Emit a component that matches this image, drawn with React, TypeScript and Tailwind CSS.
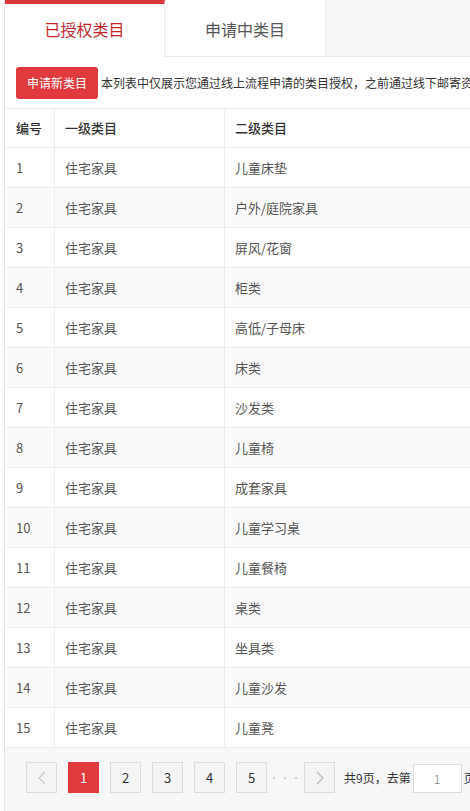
import React from "react";

const rows = [
  "儿童床垫",
  "户外/庭院家具",
  "屏风/花窗",
  "柜类",
  "高低/子母床",
  "床类",
  "沙发类",
  "儿童椅",
  "成套家具",
  "儿童学习桌",
  "儿童餐椅",
  "桌类",
  "坐具类",
  "儿童沙发",
  "儿童凳",
];

export default function App() {
  return (
    <div
      className="w-[470px] h-[811px] overflow-hidden bg-white"
      style={{ fontFamily: '"Microsoft YaHei", "Noto Sans CJK SC", "Noto Sans", sans-serif' }}
    >
      <div className="ml-[4px] w-[600px] border-l border-[#e6e6e6]">
        {/* Tabs */}
        <div className="flex h-[57px] bg-[#f6f6f6] border-b border-[#e8e8e8]">
          <div className="w-[160px] h-[57px] shrink-0 bg-white border-t-4 border-[#d8393d] border-r border-r-[#ececec] flex items-center justify-center pb-[3px] text-[16px] text-[#c5282c]">
            已授权类目
          </div>
          <div className="w-[161px] h-[56px] shrink-0 bg-white border-r border-[#ececec] flex items-center justify-center pt-[2px] text-[16px] text-[#555]">
            申请中类目
          </div>
        </div>

        {/* Action bar */}
        <div className="flex items-center pl-[11px] pt-[10px] pb-[9px] whitespace-nowrap">
          <button className="w-[82px] h-[32px] shrink-0 rounded-[3px] bg-[#e0393e] text-white text-[12px] flex items-center justify-center">
            申请新类目
          </button>
          <span className="ml-[3px] text-[12px] text-[#333]">
            本列表中仅展示您通过线上流程申请的类目授权，之前通过线下邮寄资
          </span>
        </div>

        {/* Table */}
        <div className="ml-[1px] border-t border-[#e8e8e8]">
          <div className="flex h-[39px] items-center border-b border-[#ececec] text-[13px] text-[#333] font-medium">
            <div className="w-[49px] h-full flex items-center pl-[10px] border-r border-[#ececec]">编号</div>
            <div className="w-[170px] h-full flex items-center pl-[10px] border-r border-[#ececec]">一级类目</div>
            <div className="flex-1 h-full flex items-center pl-[10px]">二级类目</div>
          </div>
          {rows.map((name, i) => (
            <div
              key={i}
              className={
                "flex h-[40px] items-center border-b border-[#ececec] text-[13px] text-[#555] " +
                (i % 2 === 1 ? "bg-[#fafafa]" : "bg-white")
              }
            >
              <div className="w-[49px] h-full flex items-center pl-[10px] border-r border-[#ececec]">{i + 1}</div>
              <div className="w-[170px] h-full flex items-center pl-[10px] border-r border-[#ececec]">住宅家具</div>
              <div className="flex-1 h-full flex items-center pl-[10px]">{name}</div>
            </div>
          ))}
        </div>

        {/* Pagination */}
        <div className="h-[70px] bg-[#f7f7f7] flex items-start pt-[14px] pl-[21px] whitespace-nowrap">
          <div className="w-[31px] h-[31px] shrink-0 border border-[#dcdcdc] bg-[#f4f4f4] flex items-center justify-center">
            <svg width="8" height="14" viewBox="0 0 8 14" fill="none">
              <path d="M7 1L1 7l6 6" stroke="#c8c8c8" strokeWidth="1.2" />
            </svg>
          </div>
          <div className="ml-[11px] w-[31px] h-[31px] shrink-0 bg-[#e0393e] text-white text-[13px] flex items-center justify-center">
            1
          </div>
          {["2", "3", "4", "5"].map((n) => (
            <div
              key={n}
              className="ml-[11px] w-[31px] h-[31px] shrink-0 border border-[#dcdcdc] bg-[#f4f4f4] text-[#333] text-[13px] flex items-center justify-center"
            >
              {n}
            </div>
          ))}
          <div className="w-[37px] h-[31px] shrink-0 flex items-center justify-center text-[10px] text-[#ccc] tracking-[1px]">
            ···
          </div>
          <div className="w-[31px] h-[31px] shrink-0 border border-[#dcdcdc] bg-[#f4f4f4] flex items-center justify-center">
            <svg width="8" height="14" viewBox="0 0 8 14" fill="none">
              <path d="M1 1l6 6-6 6" stroke="#b8b8b8" strokeWidth="1.2" />
            </svg>
          </div>
          <span className="ml-[9px] h-[31px] flex items-center text-[12px] text-[#333]">共9页，去第</span>
          <div className="ml-[2px] mt-[2px] w-[49px] h-[29px] shrink-0 border border-[#dcdcdc] bg-white text-[12px] text-[#999] flex items-center justify-center">
            1
          </div>
          <span className="ml-[2px] h-[31px] flex items-center text-[12px] text-[#333]">页</span>
        </div>
      </div>
    </div>
  );
}
